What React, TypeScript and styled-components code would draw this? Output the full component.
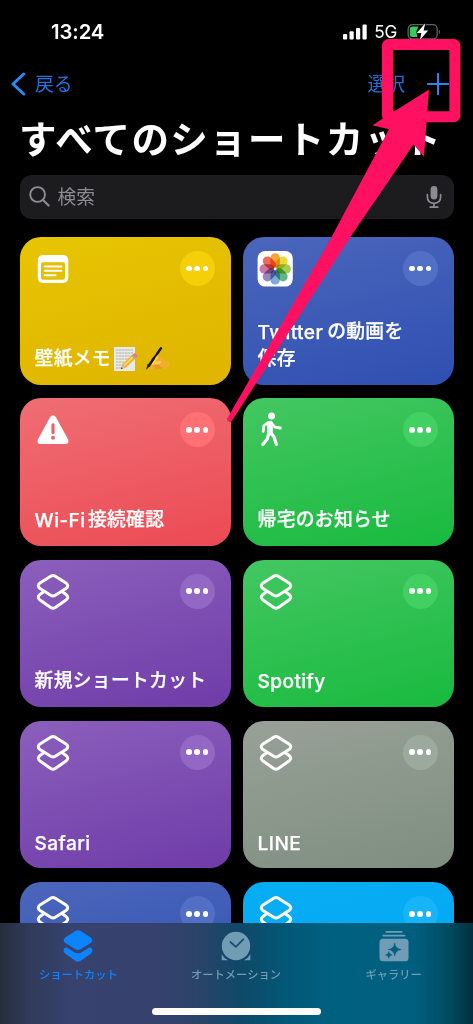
import React from 'react';
import styled, { createGlobalStyle } from 'styled-components';

const GlobalStyle = createGlobalStyle`
  * { box-sizing: border-box; }
  body { margin: 0; background: #000; }
`;

const Screen = styled.main`
  position: relative;
  width: 473px;
  height: 1024px;
  overflow: hidden;
  background: #000;
  color: #fff;
  font-family: Inter, 'Noto Sans CJK JP', sans-serif;
`;

const StatusBar = styled.div`
  display: flex;
  justify-content: space-between;
  align-items: center;
  height: 62px;
  padding: 1px 34px 0 51px;
`;

const Clock = styled.span`
  font-size: 20.3px;
  font-weight: 600;
  line-height: 24px;
  letter-spacing: -0.1px;
`;

const StatusIcons = styled.div`
  display: flex;
  align-items: center;
  gap: 7px;
`;

const Network = styled.span`
  font-size: 17.2px;
  line-height: 20px;
  margin: 1px 1px 0 0;
  letter-spacing: -0.3px;
`;

const NavBar = styled.nav`
  display: flex;
  align-items: center;
  justify-content: space-between;
  height: 44px;
  padding: 0 24px 0 11px;
`;

const NavGroup = styled.div<{ $gap: number }>`
  display: flex;
  align-items: center;
  gap: ${(p) => p.$gap}px;
`;

const NavText = styled.span`
  font-size: 18.8px;
  line-height: 24px;
  padding-top: 2px;
  color: #2173dc;
`;

const Title = styled.h1`
  margin: 6px 0 0 19px;
  font-size: 37.5px;
  line-height: 56px;
  font-weight: 700;
  letter-spacing: 1.35px;
  white-space: nowrap;
`;

const SearchField = styled.div`
  display: flex;
  align-items: center;
  margin: 7px 19.5px 0;
  height: 43.5px;
  padding: 0 12px 0 9px;
  border-radius: 12px;
  background: #1c1c1f;
  color: #8b8b91;
`;

const Placeholder = styled.span`
  flex: 1;
  margin: 2px 0 0 8px;
  font-size: 18.8px;
  line-height: 26px;
`;

const Grid = styled.section`
  display: grid;
  grid-template-columns: 211px 211px;
  grid-auto-rows: 147.5px;
  gap: 13.8px 12px;
  padding: 18.5px 0 0 19.6px;
`;

const Card = styled.article<{ $from: string; $to: string }>`
  display: flex;
  flex-direction: column;
  justify-content: space-between;
  padding: 14px 16px 12px 15px;
  border-radius: 21px;
  background: linear-gradient(165deg, ${(p) => p.$from}, ${(p) => p.$to});
`;

const CardTop = styled.div`
  display: flex;
  justify-content: space-between;
  align-items: flex-start;
`;

const More = styled.span<{ $color: string }>`
  display: flex;
  align-items: center;
  justify-content: center;
  gap: 2.6px;
  width: 35px;
  height: 35px;
  border-radius: 50%;
  background: ${(p) => p.$color};
`;

const Dot = styled.i`
  width: 5.8px;
  height: 5.8px;
  border-radius: 50%;
  background: #fff;
`;

const CardLabel = styled.div`
  font-size: 18.8px;
  line-height: 26.7px;
  font-weight: 500;
  letter-spacing: 0.3px;
  -webkit-text-stroke: 0.25px #fff;
`;

const Line = styled.div`
  display: flex;
  align-items: center;
  white-space: nowrap;
`;

const Latin = styled.span<{ $gap?: number }>`
  font-size: 19.1px;
  font-weight: 550;
  letter-spacing: 0.4px;
  margin-right: ${(p) => p.$gap ?? 0}px;
`;

const EmojiRow = styled.span`
  display: flex;
  gap: 7px;
  margin-left: 2px;
`;

const TabBar = styled.footer`
  position: absolute;
  left: 0;
  right: 0;
  bottom: 0;
  height: 101px;
  display: flex;
  flex-direction: column;
  align-items: center;
  justify-content: space-between;
  padding-bottom: 9.5px;
  background: linear-gradient(90deg, #252e3d 0, #303a59 28px, #37426f 72px, #36416d 160px, #284469 202px, #0f4868 240px, #035777 285px, #006080 330px, #005f7f 415px, #004c62 448px, #00303d 473px);
`;

const Tabs = styled.div`
  display: flex;
  width: 473px;
  margin-left: -1px;
`;

const Tab = styled.div<{ $active?: boolean }>`
  flex: 1;
  display: flex;
  flex-direction: column;
  align-items: center;
  padding-top: 6px;
  color: ${(p) => (p.$active ? '#0d84ff' : '#719db4')};
`;

const TabLabel = styled.span`
  font-size: 11.25px;
  line-height: 16px;
  font-weight: 500;
`;

const HomeIndicator = styled.div`
  width: 169px;
  height: 6.5px;
  border-radius: 4px;
  background: #fff;
`;

const Annotation = styled.svg`
  position: absolute;
  left: 0;
  top: 0;
  pointer-events: none;
`;

const ShortcutIcon = () => (
  <svg width="36" height="37" viewBox="0 0 36 37" fill="none" stroke="#fff" strokeWidth="3" strokeLinejoin="round">
    <path d="M15.7 2.2Q18 .9 20.3 2.2L31 8.9Q34.5 11.7 31 14.5L20.3 21.3Q18 22.6 15.7 21.3L5 14.5Q1.5 11.7 5 8.9Z" />
    <path d="M9 17.6L5 20.4Q1.5 23.2 5 26L15.7 33.5Q18 34.9 20.3 33.5L31 26Q34.5 23.2 31 20.4L27 17.6" />
  </svg>
);

const NoteIcon = () => (
  <svg width="36" height="36" viewBox="0 0 36 36">
    <rect x="2.8" y="4" width="30.5" height="28" rx="5" fill="#fff" />
    <rect x="6" y="11.2" width="24" height="17.6" rx="2" fill="#e6c000" />
    <path d="M9.7 15.4H26.5M9.7 19.8H26.5M9.7 24.2H20.5" stroke="#fff" strokeWidth="2" strokeLinecap="round" />
  </svg>
);

const petals = ['#f79a1c', '#e6d529', '#9ac83c', '#52ad80', '#6fa3d6', '#8a79b4', '#c46a9c', '#ea5b49'];

const PhotosIcon = () => (
  <svg width="36" height="36" viewBox="0 0 36 36" overflow="visible">
    <rect x="-.4" width="35.2" height="35.6" rx="7.5" fill="#fff" />
    {petals.map((c, i) => (
      <rect
        key={c}
        x="12.5"
        y="2.2"
        width="9.4"
        height="14.6"
        rx="4.7"
        fill={c}
        opacity=".9"
        style={{ mixBlendMode: 'multiply' }}
        transform={`rotate(${i * 45} 17.2 17.9)`}
      />
    ))}
  </svg>
);

const WarningIcon = () => (
  <svg width="36" height="36" viewBox="0 0 36 36">
    <path d="M15.2 5Q18 1.6 20.8 5L33 27.2Q34.8 31.8 30.4 32H5.6Q1.2 31.8 3 27.2Z" fill="#fff" />
    <path d="M18 12.8V20.6" stroke="#ed6268" strokeWidth="3.2" strokeLinecap="round" />
    <circle cx="18" cy="25.8" r="2" fill="#ed6268" />
  </svg>
);

const WalkIcon = () => (
  <svg width="36" height="36" viewBox="0 0 36 36" fill="none" stroke="#fff" strokeLinecap="round" strokeLinejoin="round">
    <circle cx="13.5" cy="4" r="3.5" fill="#fff" stroke="none" />
    <path d="M12 11.5V20.5" strokeWidth="5.6" />
    <path d="M10 10.5L5.8 13.8L5.2 19.3M13.4 11.2L16.9 15.2L22.4 16" strokeWidth="2.8" />
    <path d="M13 21L16 25L18.4 32.4M10.5 22.5L9.2 27L4.8 32.6" strokeWidth="3.2" />
  </svg>
);

const MemoEmoji = () => (
  <svg width="25" height="26" viewBox="0 0 25 26" role="img" aria-label="📝">
    <path d="M1 1H22V25H1Z" fill="#e9e9e5" />
    <path d="M3 4H20M3 7H20M3 10H19M3 13H16M3 16H12M3 19H10M3 22H8" stroke="#a9aba8" strokeWidth=".9" strokeDasharray="2 .6 3 .5" />
    <path d="M8 23L9.5 18L19 9L22.5 12.5L13 21.5Z" fill="#f3b42d" />
    <path d="M11 19.5L20.5 10.5" stroke="#ffdc65" strokeWidth="1.6" />
    <path d="M19 9L20.4 7.7Q22 6.5 23.5 8.2Q25 10 23.6 11.3L22.5 12.5Z" fill="#e8798a" />
    <path d="M18 10L19 9L22.5 12.5L21.5 13.5Z" fill="#a5adb3" />
    <path d="M8 23L9.5 18L13 21.5Z" fill="#dfb487" />
    <path d="M8 23L8.5 21.2L9.8 22.4Z" fill="#222" />
  </svg>
);

const WritingEmoji = () => (
  <svg width="26" height="26" viewBox="0 0 26 26" role="img" aria-label="✍️">
    <path d="M5 16.5L10 10Q12 8.5 14.5 10.3L19 13.5Q22 16 25.5 17L24 20.5Q20 23 15 23H5Q2 21.5 4 20.5Z" fill="#f1ad2b" />
    <path d="M6 16L11 10Q14 9 13 12L10 16L15 15Q18 16.6 14 18L7 19Z" fill="#ffcc50" />
    <path d="M8 20H15M10 22H17" stroke="#cf8a1c" strokeWidth=".8" />
    <path d="M4 19.5L9 12M12.3 7.5L16 2.2" stroke="#171614" strokeWidth="2.4" strokeLinecap="round" />
    <path d="M9 12L12.3 7.5" stroke="#171614" strokeWidth="2" />
    <path d="M1 24L2.6 18L5.4 19.8Z" fill="#282727" />
  </svg>
);

type CardData = { label?: React.ReactNode; from: string; to: string; more: string; icon?: React.ReactNode };

const cards: CardData[] = [
  { label: <Line>壁紙メモ<EmojiRow><MemoEmoji /><WritingEmoji /></EmojiRow></Line>, from: '#e7c503', to: '#dfb400', more: '#f5cf08', icon: <NoteIcon /> },
  { label: <><Line><Latin $gap={4}>Twitter</Latin><span>の動画を</span></Line><Line>保存</Line></>, from: '#4b66bb', to: '#2f4fb1', more: '#536fc5', icon: <PhotosIcon /> },
  { label: <Line><Latin $gap={2.5}>Wi-Fi</Latin><span>接続確認</span></Line>, from: '#ef6e73', to: '#ec4a54', more: '#ff7075', icon: <WarningIcon /> },
  { label: <Line>帰宅のお知らせ</Line>, from: '#44c762', to: '#18ba3e', more: '#43d062', icon: <WalkIcon /> },
  { label: <Line>新規ショートカット</Line>, from: '#8b5fbc', to: '#6f3ca8', more: '#9367c4' },
  { label: <Line><Latin>Spotify</Latin></Line>, from: '#44c762', to: '#18ba3e', more: '#43d062' },
  { label: <Line><Latin>Safari</Latin></Line>, from: '#8b5fbc', to: '#6f3ca8', more: '#9367c4' },
  { label: <Line><Latin>LINE</Latin></Line>, from: '#98a198', to: '#7e8e7f', more: '#9ca99d' },
  { from: '#4b66bb', to: '#2f4fb1', more: '#536fc5' },
  { from: '#08aef2', to: '#00a5f5', more: '#18b4f8' },
];

const ShortcutTabIcon = () => (
  <svg width="36" height="38" viewBox="0 0 36 38" fill="currentColor">
    <path d="M15.4 2Q18 .4 20.6 2L30.7 8.4Q34 11.2 30.7 14L20.6 20.2Q18 21.8 15.4 20.2L5.3 14Q2 11.2 5.3 8.4Z" />
    <path d="M6.3 18.2L15 23.7Q18 25.3 21 23.7L29.7 18.2Q34.5 20 31 24.6L20.6 31.7Q18 33.4 15.4 31.7L5 24.6Q1.5 20 6.3 18.2Z" />
  </svg>
);

const ClockTabIcon = () => (
  <svg width="36" height="38" viewBox="0 0 36 38">
    <path d="M3.7 25.2Q6 29.4 10 31.3H3.7ZM32.3 25.2Q30 29.4 26 31.3H32.3Z" fill="currentColor" />
    <circle cx="18" cy="17" r="14.2" fill="currentColor" />
    <path d="M12.5 13L17.8 17.8L25.3 10.3" fill="none" stroke="#17506d" strokeWidth="1.8" strokeLinecap="round" strokeLinejoin="round" />
  </svg>
);

const GalleryTabIcon = () => (
  <svg width="36" height="38" viewBox="0 0 36 38">
    <path d="M10.3 2.8H25.7M7.3 6.6H28.7" stroke="currentColor" strokeWidth="1.8" strokeLinecap="round" />
    <rect x="3.5" y="9.8" width="29" height="22.5" rx="3.5" fill="currentColor" />
    <path d="M18.7 14Q19.4 19.8 25.2 20.5Q19.4 21.2 18.7 27Q18 21.2 12.2 20.5Q18 19.8 18.7 14ZM12.8 22.6Q13.2 25.6 16.2 26Q13.2 26.4 12.8 29.4Q12.4 26.4 9.4 26Q12.4 25.6 12.8 22.6Z" fill="#02607f" stroke="#02607f" strokeWidth=".5" />
  </svg>
);

export default function App() {
  return (
    <Screen>
      <GlobalStyle />
      <StatusBar>
        <Clock>13:24</Clock>
        <StatusIcons>
          <svg width="24" height="16" viewBox="0 0 24 16" fill="#fff">
            <rect x="0" y="10" width="4.2" height="5.5" rx="1" />
            <rect x="6.5" y="7.2" width="4.2" height="8.3" rx="1" />
            <rect x="13" y="4" width="4.2" height="11.5" rx="1" />
            <rect x="19.5" y="0.5" width="4.2" height="15" rx="1" />
          </svg>
          <Network>5G</Network>
          <svg width="34" height="18" viewBox="0 0 34 18" overflow="visible">
            <g transform="translate(2.4 0)">
              <rect x=".8" y="1.7" width="29" height="14.3" rx="4.2" fill="none" stroke="#626262" strokeWidth="1.3" />
              <path d="M31.5 6.5Q34 9 31.5 11.3Z" fill="#626262" />
              <path d="M5 3.5H11L9 8.5L10 14H5Q2.5 14 2.5 11.5V6Q2.5 3.5 5 3.5Z" fill="#36cc5d" />
              <path d="M17.9 .3L9.3 10.1H14L12.5 17L20.8 7.6H16.2Z" fill="#fff" stroke="#000" strokeWidth="1" paintOrder="stroke" />
            </g>
          </svg>
        </StatusIcons>
      </StatusBar>

      <NavBar>
        <NavGroup $gap={9}>
          <svg width="15" height="24" viewBox="0 0 15 24">
            <path d="M12.7 2L2 12L12.7 22" fill="none" stroke="#278cf5" strokeWidth="3" strokeLinecap="round" strokeLinejoin="round" />
          </svg>
          <NavText>戻る</NavText>
        </NavGroup>
        <NavGroup $gap={22}>
          <NavText>選択</NavText>
          <svg width="22" height="22" viewBox="0 0 22 22">
            <path d="M11 .8V21.2M.8 11H21.2" stroke="#2388ef" strokeWidth="2" strokeLinecap="round" />
          </svg>
        </NavGroup>
      </NavBar>

      <Title>すべてのショートカット</Title>

      <SearchField>
        <svg width="21" height="21" viewBox="0 0 21 21" fill="none" stroke="currentColor" strokeWidth="1.9" strokeLinecap="round">
          <circle cx="8.6" cy="8.5" r="7.4" />
          <path d="M14 14L19.6 19.5" strokeWidth="2.2" />
        </svg>
        <Placeholder>検索</Placeholder>
        <svg width="16" height="24" viewBox="0 0 16 24" fill="none" stroke="currentColor" strokeWidth="1.7" strokeLinecap="round">
          <rect x="4.6" y="1" width="6.8" height="13.5" rx="3.4" fill="currentColor" stroke="none" />
          <path d="M1.4 9.5V12Q1.4 18 8 18.4Q14.6 18 14.6 12V9.5M8 18.5V22M4.2 22.2H11.8" />
        </svg>
      </SearchField>

      <Grid>
        {cards.map((card, i) => (
          <Card key={i} $from={card.from} $to={card.to}>
            <CardTop>
              {card.icon ?? <ShortcutIcon />}
              <More $color={card.more}>
                <Dot />
                <Dot />
                <Dot />
              </More>
            </CardTop>
            {card.label && <CardLabel>{card.label}</CardLabel>}
          </Card>
        ))}
      </Grid>

      <TabBar>
        <Tabs>
          <Tab $active>
            <ShortcutTabIcon />
            <TabLabel>ショートカット</TabLabel>
          </Tab>
          <Tab>
            <ClockTabIcon />
            <TabLabel>オートメーション</TabLabel>
          </Tab>
          <Tab>
            <GalleryTabIcon />
            <TabLabel>ギャラリー</TabLabel>
          </Tab>
        </Tabs>
        <HomeIndicator />
      </TabBar>

      <Annotation width="473" height="430" viewBox="0 0 473 430">
        <rect x="387.5" y="44.5" width="67.4" height="72.2" rx="1" fill="none" stroke="#ff1060" strokeWidth="11" strokeLinejoin="round" />
        <path d="M429 89.5L372.3 125.3L389 129.3L330 240L227.2 418.5Q226.5 421.5 229.3 422Q231.2 422 232.5 420L350.5 236.7L413.5 144.5L424 156.7Z" fill="#ff1060" />
      </Annotation>
    </Screen>
  );
}
